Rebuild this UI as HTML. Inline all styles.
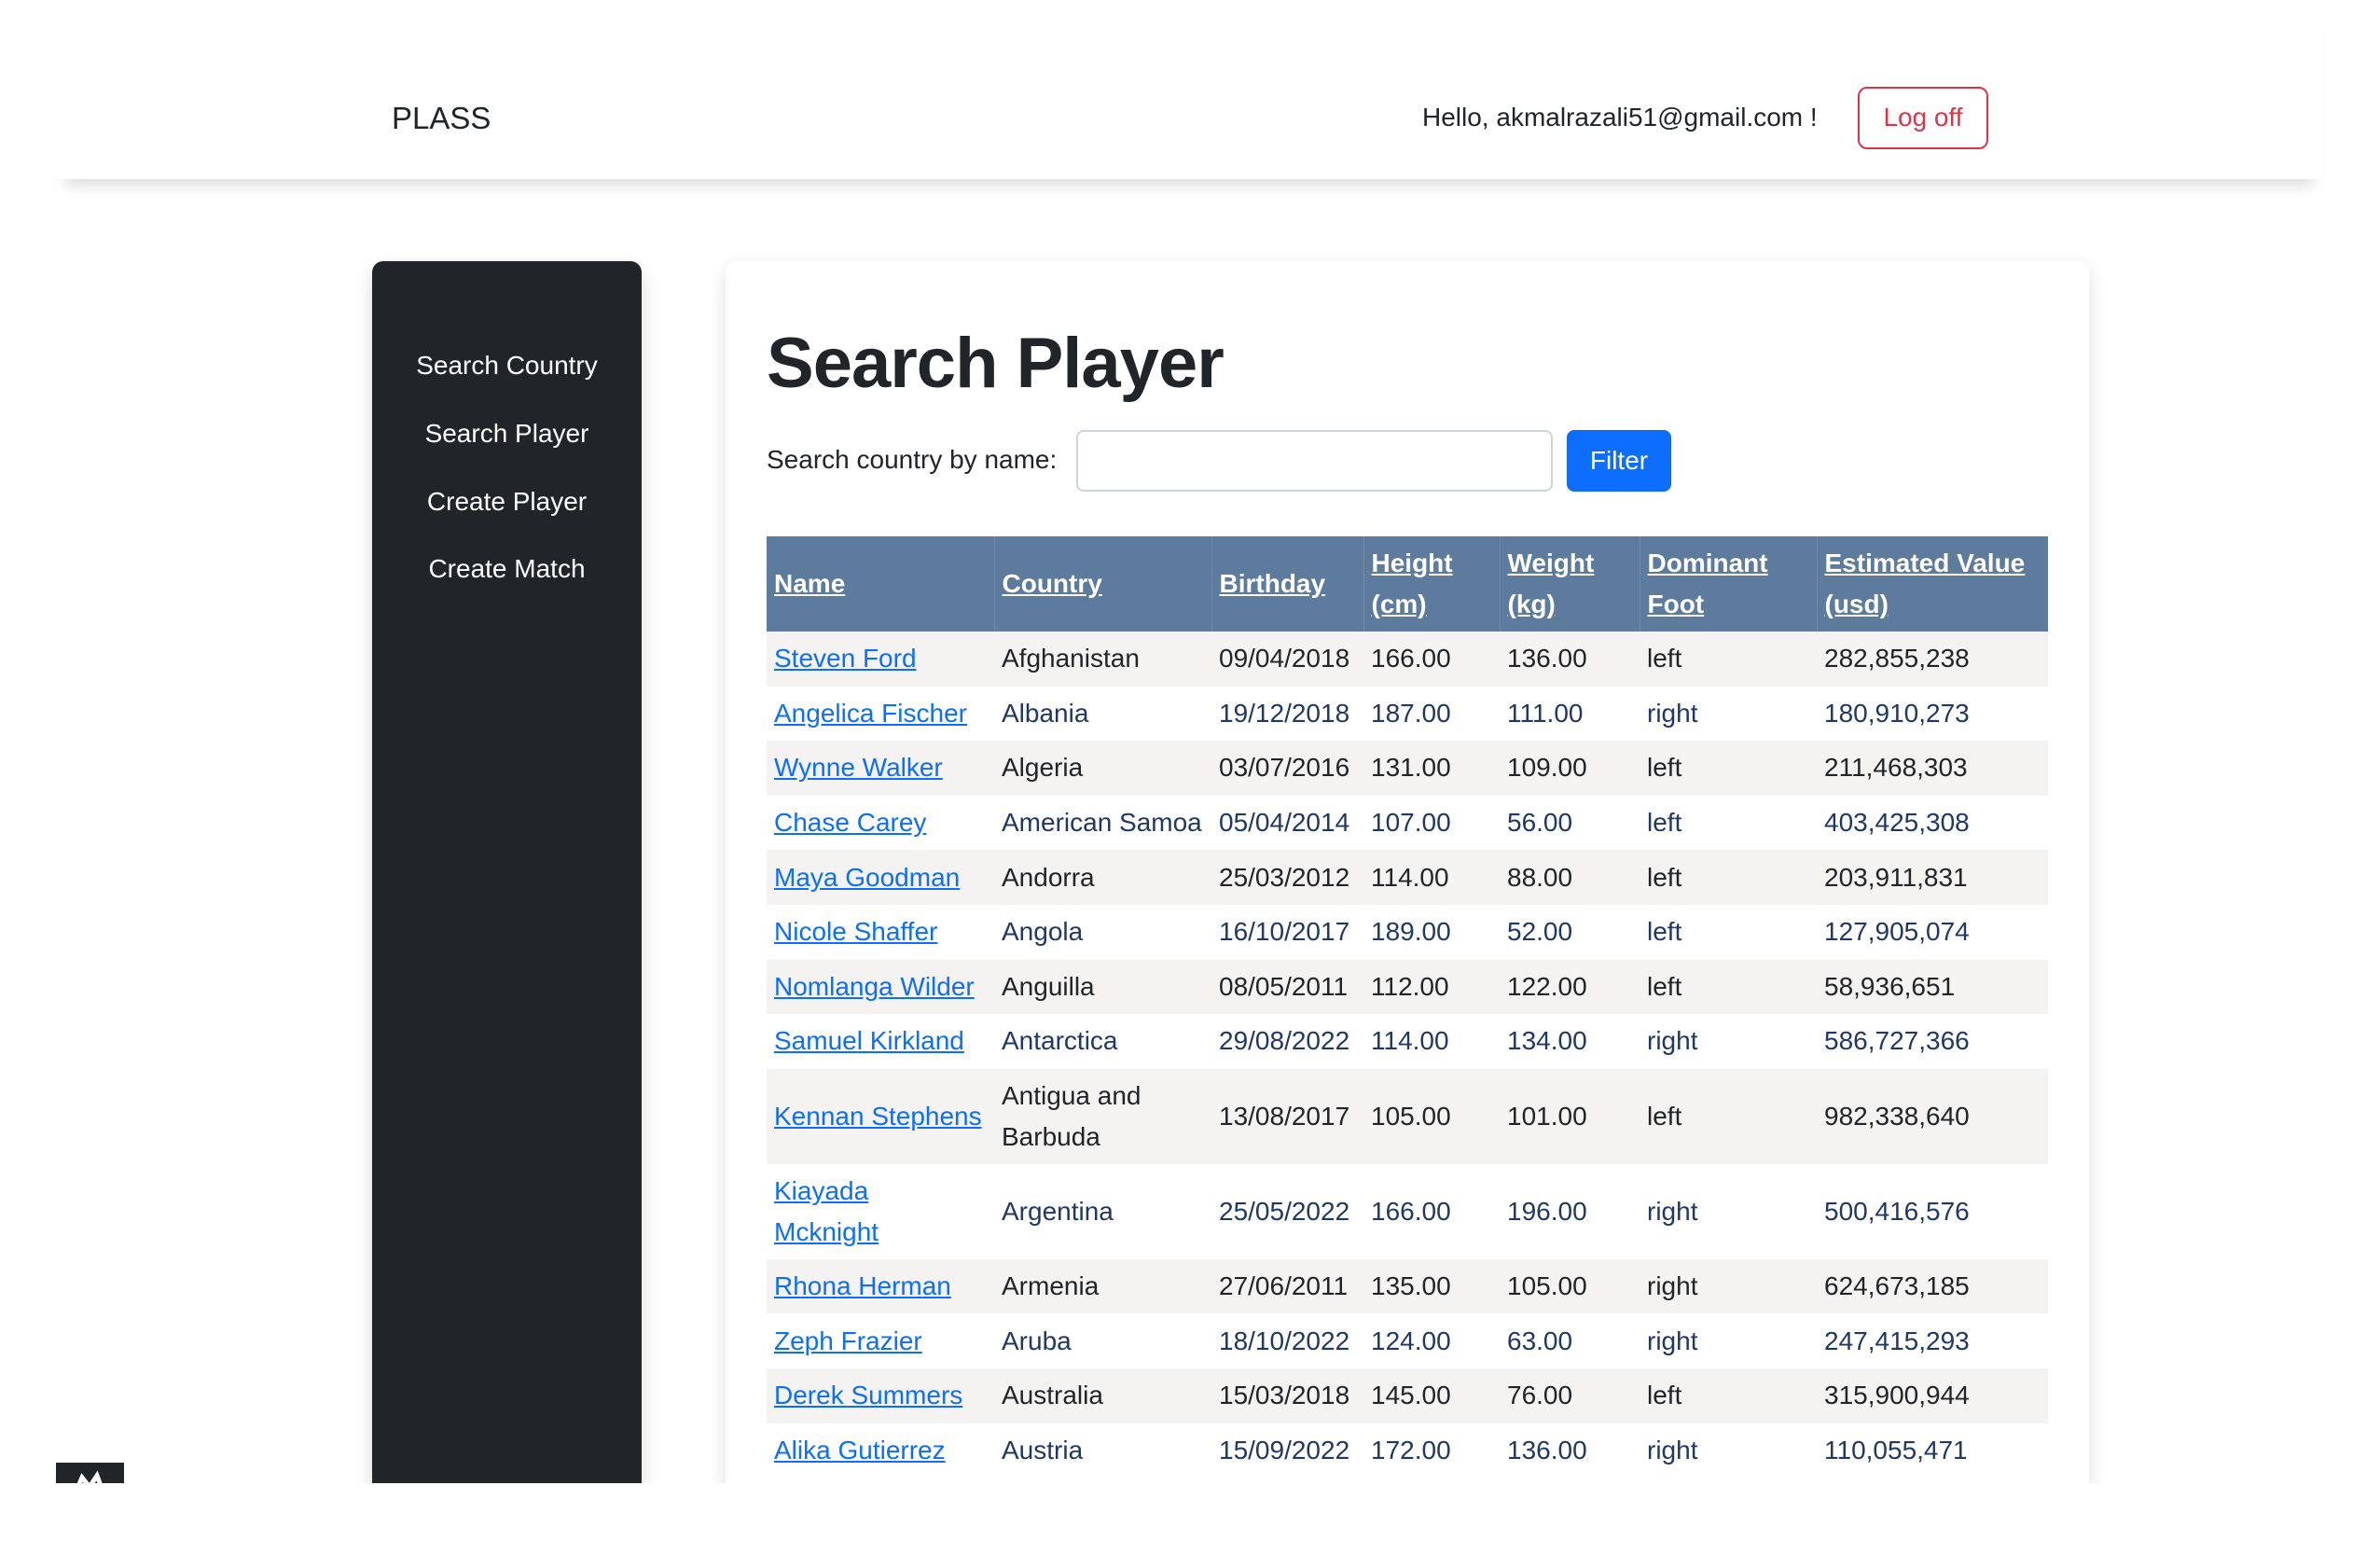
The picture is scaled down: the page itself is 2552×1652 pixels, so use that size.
<!DOCTYPE html>
<html><head><meta charset="utf-8">
<style>
*{box-sizing:border-box;margin:0;padding:0}
body{width:2552px;height:1652px;background:#fff;font-family:"Liberation Sans",sans-serif;color:#212529;position:relative;overflow:hidden}
.clip{position:absolute;left:0;top:0;width:2552px;height:1590px;overflow:hidden}
.hdr{position:absolute;left:60px;top:0;width:2430px;height:192px;background:#fff;box-shadow:0 18px 14px -10px rgba(0,0,0,.13)}
.brand{position:absolute;left:420px;top:108px;font-size:33px}
.hello{position:absolute;left:1525px;top:110px;font-size:28px}
.logoff{position:absolute;left:1992px;top:93px;width:140px;height:67px;border:2px solid #dc3545;border-radius:10px;color:#dc3545;font-size:28px;text-align:center;line-height:62px}
.side{position:absolute;left:399px;top:280px;width:289px;height:1400px;background:#212529;border-radius:12px 12px 0 0;box-shadow:0 8px 20px rgba(0,0,0,.15)}
.side div{position:absolute;left:0;width:100%;text-align:center;color:#fff;font-size:28px}
.card{position:absolute;left:778px;top:280px;width:1462px;height:1400px;background:#fff;border-radius:12px;box-shadow:0 6px 22px rgba(0,0,0,.12)}
h1{position:absolute;left:822px;top:346px;font-size:76px;font-weight:600;letter-spacing:-1px}
.lbl{position:absolute;left:822px;top:477px;font-size:28px}
.inp{position:absolute;left:1154px;top:461px;width:511px;height:66px;border:2px solid #ced4da;border-radius:8px}
.btn{position:absolute;left:1680px;top:461px;width:112px;height:66px;background:#0d6efd;border-radius:8px;color:#fff;font-size:28px;text-align:center;line-height:66px}
table{position:absolute;left:822px;top:575px;width:1374px;border-collapse:collapse;font-size:28px;table-layout:fixed}
th{background:#5d7b9c;color:#fff;text-align:left;font-weight:bold;text-decoration:underline;padding:7px 8px;line-height:44px;height:101px;border-right:1px solid #6d8aa8}
th:last-child{border-right:none}
td{padding:7px 8px;line-height:44px;vertical-align:middle}
tr.o,tr.e{height:58.6px}
tr.o td{background:#f4f3f1;color:#212529}
tr.e td{color:#1f3864}
td a{color:#0d6efd;text-decoration:underline}
.badge{position:absolute;left:60px;top:1568px;width:73px;height:40px;background:#212529}
</style></head><body>
<div class="clip">
<div class="hdr"></div>
<div class="brand">PLASS</div>
<div class="hello">Hello, akmalrazali51@gmail.com !</div>
<div class="logoff">Log off</div>
<div class="side">
<div style="top:96px">Search Country</div>
<div style="top:169px">Search Player</div>
<div style="top:242px">Create Player</div>
<div style="top:314px">Create Match</div>
</div>
<div class="card"></div>
<h1>Search Player</h1>
<div class="lbl">Search country by name:</div>
<div class="inp"></div>
<div class="btn">Filter</div>
<table>
<colgroup><col style="width:244px"><col style="width:233px"><col style="width:163px"><col style="width:146px"><col style="width:150px"><col style="width:190px"><col style="width:248px"></colgroup>
<tr><th>Name</th><th>Country</th><th>Birthday</th><th>Height (cm)</th><th>Weight (kg)</th><th>Dominant Foot</th><th>Estimated Value (usd)</th></tr>
<tr class="o"><td><a>Steven Ford</a></td><td>Afghanistan</td><td>09/04/2018</td><td>166.00</td><td>136.00</td><td>left</td><td>282,855,238</td></tr>
<tr class="e"><td><a>Angelica Fischer</a></td><td>Albania</td><td>19/12/2018</td><td>187.00</td><td>111.00</td><td>right</td><td>180,910,273</td></tr>
<tr class="o"><td><a>Wynne Walker</a></td><td>Algeria</td><td>03/07/2016</td><td>131.00</td><td>109.00</td><td>left</td><td>211,468,303</td></tr>
<tr class="e"><td><a>Chase Carey</a></td><td>American Samoa</td><td>05/04/2014</td><td>107.00</td><td>56.00</td><td>left</td><td>403,425,308</td></tr>
<tr class="o"><td><a>Maya Goodman</a></td><td>Andorra</td><td>25/03/2012</td><td>114.00</td><td>88.00</td><td>left</td><td>203,911,831</td></tr>
<tr class="e"><td><a>Nicole Shaffer</a></td><td>Angola</td><td>16/10/2017</td><td>189.00</td><td>52.00</td><td>left</td><td>127,905,074</td></tr>
<tr class="o"><td><a>Nomlanga Wilder</a></td><td>Anguilla</td><td>08/05/2011</td><td>112.00</td><td>122.00</td><td>left</td><td>58,936,651</td></tr>
<tr class="e"><td><a>Samuel Kirkland</a></td><td>Antarctica</td><td>29/08/2022</td><td>114.00</td><td>134.00</td><td>right</td><td>586,727,366</td></tr>
<tr class="o"><td><a>Kennan Stephens</a></td><td>Antigua and Barbuda</td><td>13/08/2017</td><td>105.00</td><td>101.00</td><td>left</td><td>982,338,640</td></tr>
<tr class="e"><td><a>Kiayada</a><br><a>Mcknight</a></td><td>Argentina</td><td>25/05/2022</td><td>166.00</td><td>196.00</td><td>right</td><td>500,416,576</td></tr>
<tr class="o"><td><a>Rhona Herman</a></td><td>Armenia</td><td>27/06/2011</td><td>135.00</td><td>105.00</td><td>right</td><td>624,673,185</td></tr>
<tr class="e"><td><a>Zeph Frazier</a></td><td>Aruba</td><td>18/10/2022</td><td>124.00</td><td>63.00</td><td>right</td><td>247,415,293</td></tr>
<tr class="o"><td><a>Derek Summers</a></td><td>Australia</td><td>15/03/2018</td><td>145.00</td><td>76.00</td><td>left</td><td>315,900,944</td></tr>
<tr class="e"><td><a>Alika Gutierrez</a></td><td>Austria</td><td>15/09/2022</td><td>172.00</td><td>136.00</td><td>right</td><td>110,055,471</td></tr>
</table>
<div class="badge"><svg width="73" height="40"><path d="M22 30 L28 16 L36 26 L44 14 L50 30" stroke="#fff" stroke-width="5" fill="none"/></svg></div>
</div>
</body></html>
